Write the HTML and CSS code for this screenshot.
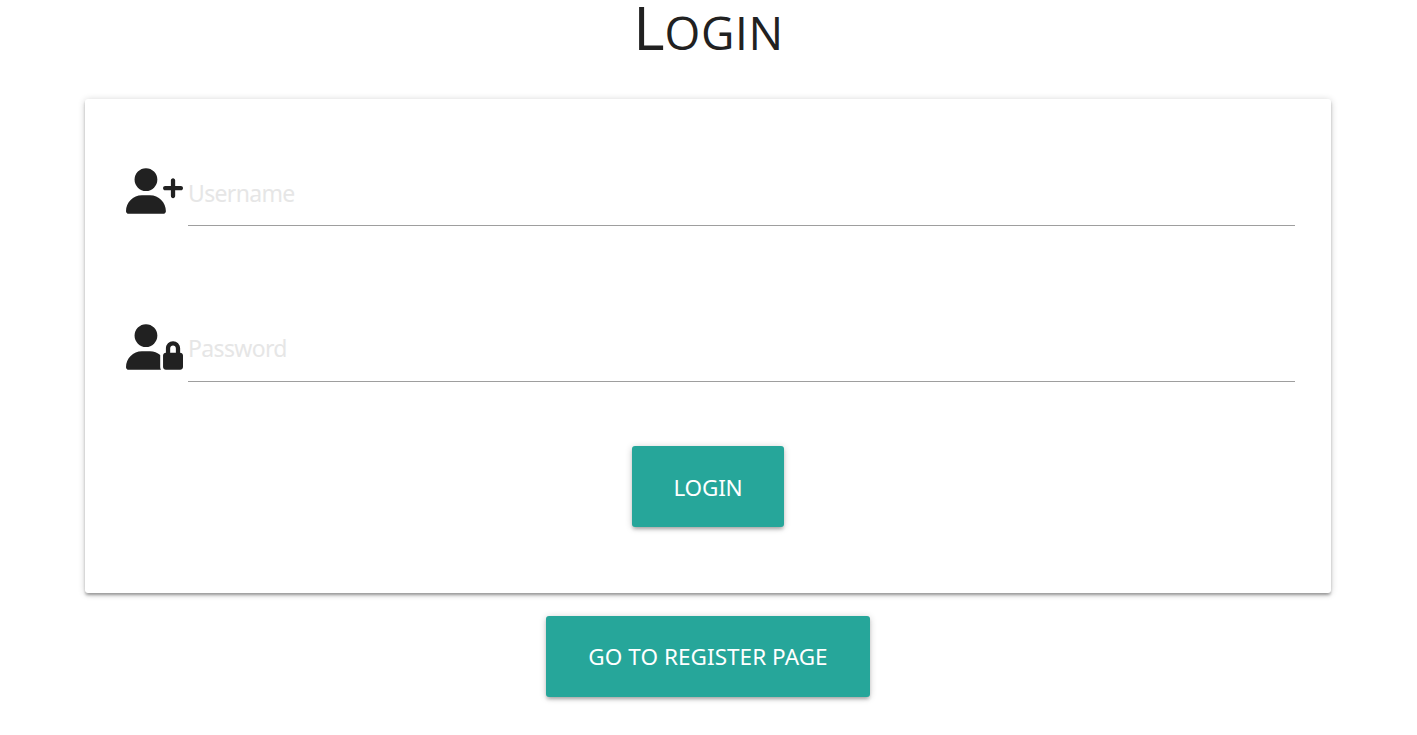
FILE: index.html
```html
<!DOCTYPE html>
<html lang="en">
<head>
<meta charset="utf-8">
<title>Login</title>
<link rel="stylesheet" href="styles.css">
</head>
<body>
<h1 class="title">L<span class="title-small">OGIN</span></h1>
<form class="card">
  <div class="field">
    <svg class="icon" viewBox="0 0 640 512"><path d="M96 128a128 128 0 1 1 256 0A128 128 0 1 1 96 128zM0 482.3C0 383.8 79.8 304 178.3 304h91.4C368.2 304 448 383.8 448 482.3c0 16.4-13.3 29.7-29.7 29.7H29.7C13.3 512 0 498.7 0 482.3zM504 312V248H440c-13.3 0-24-10.7-24-24s10.7-24 24-24h64V136c0-13.3 10.7-24 24-24s24 10.7 24 24v64h64c13.3 0 24 10.7 24 24s-10.7 24-24 24H552v64c0 13.3-10.7 24-24 24s-24-10.7-24-24z"/></svg>
    <input class="input" type="text" placeholder="Username">
  </div>
  <div class="field">
    <svg class="icon" viewBox="0 0 640 512"><path d="M224 256A128 128 0 1 0 224 0a128 128 0 1 0 0 256zm-45.7 48C79.8 304 0 383.8 0 482.3C0 498.7 13.3 512 29.7 512H392.6c-5.4-9.4-8.6-20.3-8.6-32V352c0-2.1 .1-4.2 .3-6.3c-31-26-71-41.7-114.6-41.7H178.3zM528 240c17.7 0 32 14.3 32 32v48H496V272c0-17.7 14.3-32 32-32zm-80 32v48c-17.7 0-32 14.3-32 32V480c0 17.7 14.3 32 32 32H608c17.7 0 32-14.3 32-32V352c0-17.7-14.3-32-32-32V272c0-44.2-35.8-80-80-80s-80 35.8-80 80z"/></svg>
    <input class="input input-password" type="password" placeholder="Password">
  </div>
  <button class="btn btn-login" type="button">LOGIN</button>
</form>
<button class="btn btn-register" type="button">GO TO REGISTER PAGE</button>
</body>
</html>
```
FILE: styles.css
```css
* { box-sizing: border-box; }
body {
  margin: 0;
  height: 735px;
  overflow: hidden;
  display: flex;
  flex-direction: column;
  align-items: center;
  background: #fff;
  color: #212121;
  font-family: "Noto Sans", "Open Sans", sans-serif;
}
.title {
  margin: 0;
  height: 99px;
  font-family: "Open Sans", sans-serif;
  font-size: 60px;
  font-weight: 400;
  line-height: 54px;
}
.title-small { font-size: 46px; letter-spacing: 0.6px; }
.card {
  width: 1246px;
  height: 494px;
  margin-right: 1px;
  padding: 69px 36px 0 41px;
  display: flex;
  flex-direction: column;
  align-items: center;
  border-radius: 3px;
  box-shadow: 0 3px 3px rgba(0,0,0,.14), 0 4px 2px -3px rgba(0,0,0,.12), 0 1px 7px rgba(0,0,0,.2), 0 2px 2px rgba(0,0,0,.1);
}
.field {
  width: 100%;
  height: 156px;
  display: flex;
  gap: 5px;
}
.icon {
  width: 57px;
  height: 46px;
  flex: none;
  fill: #212121;
}
.input {
  flex: 1;
  height: 58px;
  padding: 0 0 7px;
  border: 0;
  border-bottom: 1px solid #9e9e9e;
  outline: 0;
  background: transparent;
  font: 23px "Noto Sans", sans-serif;
  letter-spacing: -0.65px;
}
.input-password { padding-bottom: 9px; }
.input::placeholder { color: #e6e6e6; opacity: 1; }
.btn {
  flex: none;
  height: 81px;
  padding: 0;
  border: 0;
  border-radius: 3px;
  background: #26a69a;
  color: #fff;
  font: 22.5px/81px "Noto Sans", sans-serif;
  box-shadow: 0 3px 3px rgba(0,0,0,.14), 0 4px 2px -3px rgba(0,0,0,.12), 0 1px 7px rgba(0,0,0,.2);
}
.btn-login { width: 152px; margin: -34px 5px 0 0; padding-top: 1px; letter-spacing: -0.2px; }
.btn-register { width: 324px; margin: 23px 1px 0 0; letter-spacing: 0.05px; }
```
